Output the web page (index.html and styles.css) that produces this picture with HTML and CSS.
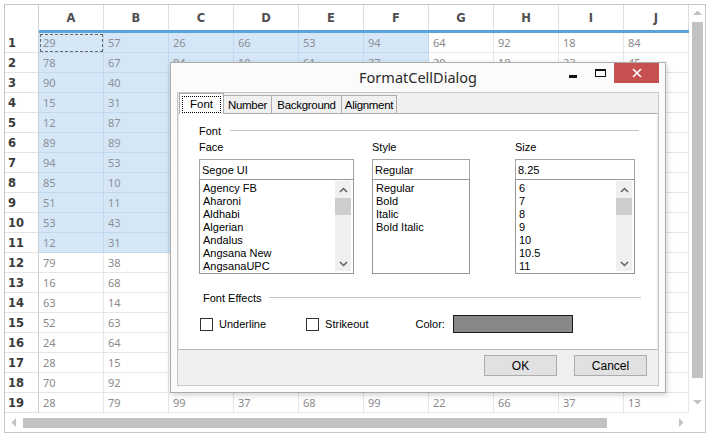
FILE: index.html
```html
<!DOCTYPE html>
<html>
<head>
<meta charset="utf-8">
<link rel="stylesheet" href="styles.css">
</head>
<body>
<div class="sheet">
  <div class="table">
    <div class="hd corner"></div><div class="hd">A</div><div class="hd">B</div><div class="hd">C</div><div class="hd">D</div><div class="hd">E</div><div class="hd">F</div><div class="hd">G</div><div class="hd">H</div><div class="hd">I</div><div class="hd">J</div>
    <div class="gap"></div><div class="bar"></div>
    <div class="rh">1</div><div class="c s cur">29</div><div class="c s">57</div><div class="c s">26</div><div class="c s">66</div><div class="c s">53</div><div class="c s">94</div><div class="c">64</div><div class="c">92</div><div class="c">18</div><div class="c">84</div>
    <div class="rh">2</div><div class="c s">78</div><div class="c s">67</div><div class="c s">84</div><div class="c s">10</div><div class="c s">61</div><div class="c s">27</div><div class="c">20</div><div class="c">18</div><div class="c">23</div><div class="c">45</div>
    <div class="rh">3</div><div class="c s">90</div><div class="c s">40</div><div class="c s">41</div><div class="c s">19</div><div class="c s">72</div><div class="c s">33</div><div class="c">58</div><div class="c">17</div><div class="c">60</div><div class="c">25</div>
    <div class="rh">4</div><div class="c s">15</div><div class="c s">31</div><div class="c s">48</div><div class="c s">77</div><div class="c s">20</div><div class="c s">65</div><div class="c">39</div><div class="c">81</div><div class="c">12</div><div class="c">56</div>
    <div class="rh">5</div><div class="c s">12</div><div class="c s">87</div><div class="c s">63</div><div class="c s">28</div><div class="c s">90</div><div class="c s">44</div><div class="c">71</div><div class="c">36</div><div class="c">95</div><div class="c">14</div>
    <div class="rh">6</div><div class="c s">89</div><div class="c s">89</div><div class="c s">22</div><div class="c s">54</div><div class="c s">37</div><div class="c s">80</div><div class="c">26</div><div class="c">69</div><div class="c">43</div><div class="c">88</div>
    <div class="rh">7</div><div class="c s">94</div><div class="c s">53</div><div class="c s">75</div><div class="c s">13</div><div class="c s">46</div><div class="c s">59</div><div class="c">82</div><div class="c">30</div><div class="c">67</div><div class="c">21</div>
    <div class="rh">8</div><div class="c s">85</div><div class="c s">10</div><div class="c s">35</div><div class="c s">92</div><div class="c s">16</div><div class="c s">73</div><div class="c">49</div><div class="c">57</div><div class="c">24</div><div class="c">62</div>
    <div class="rh">9</div><div class="c s">51</div><div class="c s">11</div><div class="c s">68</div><div class="c s">40</div><div class="c s">83</div><div class="c s">27</div><div class="c">15</div><div class="c">74</div><div class="c">38</div><div class="c">99</div>
    <div class="rh">10</div><div class="c s">53</div><div class="c s">43</div><div class="c s">19</div><div class="c s">86</div><div class="c s">52</div><div class="c s">11</div><div class="c">64</div><div class="c">42</div><div class="c">78</div><div class="c">33</div>
    <div class="rh">11</div><div class="c s">12</div><div class="c s">31</div><div class="c s">97</div><div class="c s">25</div><div class="c s">61</div><div class="c s">48</div><div class="c">87</div><div class="c">19</div><div class="c">55</div><div class="c">70</div>
    <div class="rh">12</div><div class="c">79</div><div class="c">38</div><div class="c">44</div><div class="c">66</div><div class="c">12</div><div class="c">90</div><div class="c">31</div><div class="c">58</div><div class="c">26</div><div class="c">47</div>
    <div class="rh">13</div><div class="c">16</div><div class="c">68</div><div class="c">53</div><div class="c">21</div><div class="c">79</div><div class="c">35</div><div class="c">92</div><div class="c">14</div><div class="c">63</div><div class="c">80</div>
    <div class="rh">14</div><div class="c">63</div><div class="c">14</div><div class="c">87</div><div class="c">45</div><div class="c">30</div><div class="c">72</div><div class="c">18</div><div class="c">56</div><div class="c">91</div><div class="c">27</div>
    <div class="rh">15</div><div class="c">52</div><div class="c">63</div><div class="c">29</div><div class="c">74</div><div class="c">58</div><div class="c">16</div><div class="c">43</div><div class="c">85</div><div class="c">37</div><div class="c">62</div>
    <div class="rh">16</div><div class="c">24</div><div class="c">64</div><div class="c">71</div><div class="c">39</div><div class="c">95</div><div class="c">50</div><div class="c">22</div><div class="c">67</div><div class="c">84</div><div class="c">13</div>
    <div class="rh">17</div><div class="c">28</div><div class="c">15</div><div class="c">36</div><div class="c">82</div><div class="c">47</div><div class="c">61</div><div class="c">76</div><div class="c">29</div><div class="c">50</div><div class="c">94</div>
    <div class="rh">18</div><div class="c">70</div><div class="c">92</div><div class="c">60</div><div class="c">18</div><div class="c">34</div><div class="c">88</div><div class="c">53</div><div class="c">41</div><div class="c">75</div><div class="c">20</div>
    <div class="rh">19</div><div class="c">28</div><div class="c">79</div><div class="c">99</div><div class="c">37</div><div class="c">68</div><div class="c">99</div><div class="c">22</div><div class="c">66</div><div class="c">37</div><div class="c">13</div>
  </div>
  <div class="vscroll">
    <svg class="arr" width="9" height="6" viewBox="0 0 9 6"><polygon points="0,5 4.5,0.5 9,5" fill="#c2c2c2"/></svg>
    <div class="vthumb"></div>
    <svg class="arr down" width="9" height="6" viewBox="0 0 9 6"><polygon points="0,1 4.5,5.5 9,1" fill="#c2c2c2"/></svg>
  </div>
  <div class="hscroll">
    <svg class="arr" width="6" height="9" viewBox="0 0 6 9"><polygon points="5,0 0.5,4.5 5,9" fill="#c2c2c2"/></svg>
    <div class="hthumb"></div>
    <svg class="arr right" width="6" height="9" viewBox="0 0 6 9"><polygon points="1,0 5.5,4.5 1,9" fill="#c2c2c2"/></svg>
  </div>
  <div class="scorner"></div>
</div>

<div class="dlg">
  <div class="titlebar">
    <div></div>
    <div class="title">FormatCellDialog</div>
    <div class="ctrls">
      <div class="min"></div>
      <div class="max"></div>
      <div class="close">
        <svg width="10" height="10" viewBox="0 0 10 10"><path d="M1 1 L9 9 M9 1 L1 9" stroke="#fff" stroke-width="1.6"/></svg>
      </div>
    </div>
  </div>
  <div class="client">
    <div class="tabs">
      <div class="tab sel"><span class="focus">Font</span></div>
      <div class="tab t-num">Number</div>
      <div class="tab t-bg">Background</div>
      <div class="tab t-al">Alignment</div>
    </div>
    <div class="page">
      <div class="group g1"><span>Font</span><i></i></div>
      <div class="cols">
        <div class="col face">
          <div class="lbl">Face</div>
          <div class="tb">Segoe UI</div>
          <div class="lb">
            <div class="items">
              <div>Agency FB</div><div>Aharoni</div><div>Aldhabi</div><div>Algerian</div><div>Andalus</div><div>Angsana New</div><div>AngsanaUPC</div>
            </div>
            <div class="lsb">
              <svg width="9" height="6" viewBox="0 0 9 6"><polyline points="1,5 4.5,1.5 8,5" fill="none" stroke="#606060" stroke-width="1.5"/></svg>
              <div class="lthumb"></div>
              <svg class="ldown" width="9" height="6" viewBox="0 0 9 6"><polyline points="1,1 4.5,4.5 8,1" fill="none" stroke="#606060" stroke-width="1.5"/></svg>
            </div>
          </div>
        </div>
        <div class="col style">
          <div class="lbl">Style</div>
          <div class="tb">Regular</div>
          <div class="lb">
            <div class="items">
              <div>Regular</div><div>Bold</div><div>Italic</div><div>Bold Italic</div>
            </div>
          </div>
        </div>
        <div class="col size">
          <div class="lbl">Size</div>
          <div class="tb">8.25</div>
          <div class="lb">
            <div class="items">
              <div>6</div><div>7</div><div>8</div><div>9</div><div>10</div><div>10.5</div><div>11</div>
            </div>
            <div class="lsb">
              <svg width="9" height="6" viewBox="0 0 9 6"><polyline points="1,5 4.5,1.5 8,5" fill="none" stroke="#606060" stroke-width="1.5"/></svg>
              <div class="lthumb"></div>
              <svg class="ldown" width="9" height="6" viewBox="0 0 9 6"><polyline points="1,1 4.5,4.5 8,1" fill="none" stroke="#606060" stroke-width="1.5"/></svg>
            </div>
          </div>
        </div>
      </div>
      <div class="group g2"><span>Font Effects</span><i></i></div>
      <div class="effects">
        <div class="chk u"><b></b>Underline</div>
        <div class="chk k"><b></b>Strikeout</div>
        <div class="color">Color:</div>
        <div class="swatch"></div>
      </div>
    </div>
    <div class="btns">
      <div class="btn">OK</div>
      <div class="btn">Cancel</div>
    </div>
  </div>
</div>
</body>
</html>
```
FILE: styles.css
```css
* { box-sizing: border-box; }
html, body { margin: 0; padding: 0; background: #fff; }
body { width: 713px; height: 438px; overflow: hidden; position: relative; }

.sheet {
  margin: 4px 0 0 4px;
  width: 702px;
  height: 429px;
  border: 1px solid #c8c8c8;
  display: grid;
  grid-template-columns: 684px 16px;
  grid-template-rows: 408px 19px;
}

.table {
  display: grid;
  grid-template-columns: 34px repeat(10, 65px);
  grid-template-rows: 25px 3px repeat(19, 20px);
  font-family: "Noto Sans", sans-serif;
}
.hd {
  border-right: 1px solid #dedede;
  display: flex; align-items: center; justify-content: center;
  font-family: "DejaVu Sans", sans-serif; font-weight: bold; font-size: 11.5px; color: #505050;
  padding-top: 1px;
}
.hd.corner { border-right: 1px solid #d0d0d0; }
.gap { border-right: 1px solid #d0d0d0; }
.bar { grid-column: 2 / -1; background: #5aa4da; }
.rh {
  border-right: 1px solid #cfcfcf;
  border-bottom: 1px solid #e3e3e3;
  font-family: "DejaVu Sans", sans-serif; font-weight: bold; font-size: 11.5px; color: #3a3a3a;
  display: flex; align-items: center; padding-left: 3px;
}
.c {
  border-right: 1px solid #e6e6e6;
  border-bottom: 1px solid #e6e6e6;
  font-size: 11px; color: #8a8a8a;
  display: flex; align-items: center; padding-left: 4px;
}
.c.s { background: #d5e7f6; border-color: #c2d8ec; color: #8a9098; }
.c.cur { outline: 1px dashed #666; outline-offset: -2px; }

.vscroll { display: flex; flex-direction: column; align-items: center; padding-top: 5px; }
.vthumb { width: 11px; height: 356px; background: #c2c2c2; margin-top: 6px; margin-left: 1px; }
.vscroll .down { margin-top: 21px; }
.hscroll { display: flex; align-items: center; padding-left: 6px; }
.hthumb { width: 584px; height: 10px; background: #c2c2c2; margin-left: 6px; }
.hscroll .right { margin-left: 71px; }
.scorner { background: #fff; }

/* Dialog */
.dlg {
  position: absolute; left: 170px; top: 62px;
  width: 496px; height: 331px;
  border: 1px solid #acacac;
  background: #fbfbfb;
  box-shadow: 1px 2px 6px rgba(0,0,0,0.18);
  font-family: "Liberation Sans", Arial, sans-serif; font-size: 11px; color: #000;
}
.titlebar {
  height: 29px;
  display: grid; grid-template-columns: 1fr auto 1fr;
  align-items: start;
}
.title { font-family: "Noto Sans", sans-serif; font-size: 14.5px; color: #2a2a2a; padding-top: 4px; }
.ctrls { display: flex; justify-content: flex-end; align-items: flex-start; }
.min { width: 8px; height: 3px; background: #111; margin-top: 12px; }
.max { width: 11px; height: 8px; border: 1px solid #111; border-top-width: 2px; margin: 6px 0 0 18px; }
.close {
  width: 45px; height: 20px; background: #c75050; margin: 0 6px 0 8px;
  display: flex; align-items: center; justify-content: center;
}

.client {
  margin-left: 6px;
  width: 482px; height: 294px;
  border: 1px solid #c6c6c6;
  background: #f0f0f0;
  display: flex; flex-direction: column;
}
.tabs { height: 20px; display: flex; align-items: flex-end; padding-left: 1px; }
.tab {
  height: 18px;
  border: 1px solid #acacac; border-bottom: none; margin-left: -1px;
  background: #f0f0f0;
  display: flex; align-items: center; justify-content: center;
  font-size: 11.5px; letter-spacing: -0.3px; font-family: "Liberation Sans", Arial, sans-serif;
}
.t-num { width: 49px; }
.t-bg { width: 71px; }
.t-al { width: 56px; }
.tab.sel {
  height: 21px; background: #fff; margin-bottom: -1px; margin-left: 0;
  position: relative; z-index: 1; width: 45px;
}
.focus { border: 1px dotted #000; height: 17px; display: flex; align-items: center; justify-content: center; width: 39px; letter-spacing: 0; }

.page {
  height: 237px;
  background: #fff;
  border-top: 1px solid #adadad; border-bottom: 1px solid #b4b4b4;
  border-left: 1px solid #e6e6e6; border-right: 1px solid #e6e6e6;
  padding: 10px 0 0 20px;
}
.group { display: flex; align-items: center; height: 13px; padding-right: 18px; }
.group i { flex: 1; height: 1px; background: #c3c3c3; margin-left: 9px; }
.g2 { margin-top: 17px; padding-left: 4px; padding-right: 16px; }
.g2 i { margin-left: 7px; }
.cols { display: flex; margin-top: 4px; }
.col { display: flex; flex-direction: column; }
.face { width: 155px; }
.style { width: 98px; margin-left: 18px; }
.size { width: 120px; margin-left: 45px; }
.lbl { height: 13px; line-height: 13px; }
.tb {
  margin-top: 5px; height: 20px;
  border: 1px solid #a5a5a5; border-bottom: none;
  padding: 3px 0 0 2px; line-height: 14px;
}
.lb {
  height: 95px; border: 1px solid #969696;
  display: flex; justify-content: space-between;
}
.items { padding: 2px 0 0 3px; line-height: 13px; }
.lsb {
  width: 16px; margin: 1px 2px 2px 0; background: #f0f0f0;
  display: flex; flex-direction: column; align-items: center; padding-top: 6px;
}
.lthumb { width: 16px; height: 17px; background: #cdcdcd; margin-top: 5px; }
.ldown { margin-top: auto; margin-bottom: 4px; }

.effects { display: flex; align-items: center; margin-top: 11px; height: 18px; }
.chk { display: flex; align-items: center; }
.chk b { width: 13px; height: 13px; border: 1px solid #333; background: #fff; margin-right: 6px; }
.u { margin-left: 1px; }
.k { margin-left: 40px; }
.color { margin-left: 47px; }
.swatch { width: 120px; height: 18px; background: #888; border: 1px solid #1a1a1a; margin-left: 8px; }

.btns { display: flex; justify-content: flex-end; padding: 5px 11px 0 0; gap: 17px; }
.btn {
  width: 73px; height: 21px;
  background: #e1e1e1; border: 1px solid #adadad;
  display: flex; align-items: center; justify-content: center;
  font-size: 12px;
}
```
